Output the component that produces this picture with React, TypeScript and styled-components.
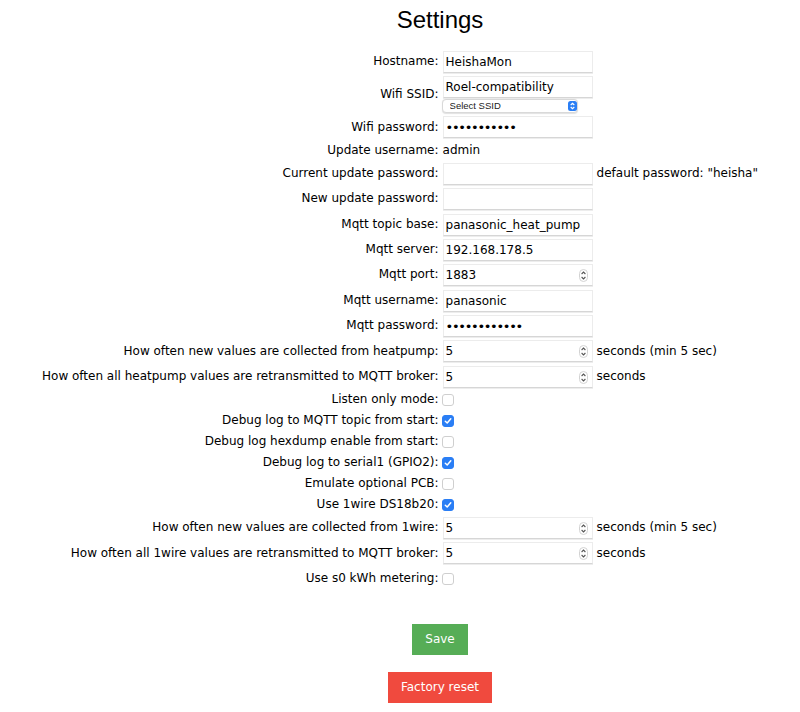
import React from "react";
import styled, { createGlobalStyle } from "styled-components";

const GlobalStyle = createGlobalStyle`
  body {
    margin: 0 8px;
    background: #ffffff;
    color: #000000;
    font-family: "DejaVu Sans", Verdana, sans-serif;
    font-size: 12px;
  }
`;

type FieldRow =
  | { kind: "input"; label: string; value: string; type?: "text" | "password" | "number"; note?: string }
  | { kind: "static"; label: string; value: string }
  | { kind: "check"; label: string; checked: boolean; gapAbove?: boolean }
  | { kind: "ssid"; label: string; value: string };

const rows: FieldRow[] = [
  { kind: "input", label: "Hostname:", value: "HeishaMon" },
  { kind: "ssid", label: "Wifi SSID:", value: "Roel-compatibility" },
  { kind: "input", label: "Wifi password:", value: "xxxxxxxxxxx", type: "password" },
  { kind: "static", label: "Update username:", value: "admin" },
  { kind: "input", label: "Current update password:", value: "", type: "password", note: 'default password: "heisha"' },
  { kind: "input", label: "New update password:", value: "", type: "password" },
  { kind: "input", label: "Mqtt topic base:", value: "panasonic_heat_pump" },
  { kind: "input", label: "Mqtt server:", value: "192.168.178.5" },
  { kind: "input", label: "Mqtt port:", value: "1883", type: "number" },
  { kind: "input", label: "Mqtt username:", value: "panasonic" },
  { kind: "input", label: "Mqtt password:", value: "xxxxxxxxxxxx", type: "password" },
  { kind: "input", label: "How often new values are collected from heatpump:", value: "5", type: "number", note: "seconds (min 5 sec)" },
  { kind: "input", label: "How often all heatpump values are retransmitted to MQTT broker:", value: "5", type: "number", note: "seconds" },
  { kind: "check", label: "Listen only mode:", checked: false },
  { kind: "check", label: "Debug log to MQTT topic from start:", checked: true },
  { kind: "check", label: "Debug log hexdump enable from start:", checked: false },
  { kind: "check", label: "Debug log to serial1 (GPIO2):", checked: true },
  { kind: "check", label: "Emulate optional PCB:", checked: false },
  { kind: "check", label: "Use 1wire DS18b20:", checked: true },
  { kind: "input", label: "How often new values are collected from 1wire:", value: "5", type: "number", note: "seconds (min 5 sec)" },
  { kind: "input", label: "How often all 1wire values are retransmitted to MQTT broker:", value: "5", type: "number", note: "seconds" },
  { kind: "check", label: "Use s0 kWh metering:", checked: false, gapAbove: true },
];

const Page = styled.div`
  padding-bottom: 10px;
`;

const Heading = styled.h2`
  margin: 6px 0 15px;
  padding-left: 80px;
  text-align: center;
  font-family: "Liberation Sans", Arial, sans-serif;
  font-size: 24px;
  line-height: 28px;
  font-weight: 400;
`;

const SettingsTable = styled.table`
  margin: 0 auto;
  border-collapse: collapse;
  border-spacing: 0;
`;

const Row = styled.tr<{ $gapAbove?: boolean }>`
  & > td {
    padding-top: ${(p) => (p.$gapAbove ? "4px" : "1.7px")};
  }
`;

const Cell = styled.td`
  padding: 1.7px 2px;
  line-height: 17.6px;
  vertical-align: middle;
  white-space: nowrap;
`;

const LabelCell = styled(Cell)`
  text-align: right;
`;

const FieldWrap = styled.div`
  position: relative;
  width: 150px;
`;

const TextInput = styled.input`
  display: block;
  box-sizing: border-box;
  width: 150px;
  height: 22px;
  margin: 0;
  padding: 0 2px;
  border: 1px solid #ececec;
  border-bottom-color: #d6d6d6;
  box-shadow: 0 1px 0 #ededed;
  background: #ffffff;
  font-family: "DejaVu Sans", Verdana, sans-serif;
  font-size: 12px;
  color: #000000;
  outline: none;

  &[type="password"] {
    font-size: 13px;
    letter-spacing: -1.3px;
  }
  &::-webkit-inner-spin-button,
  &::-webkit-outer-spin-button {
    -webkit-appearance: none;
    margin: 0;
  }
  -moz-appearance: textfield;
`;

const Spinner = styled.span`
  position: absolute;
  right: 5px;
  top: 5px;
  width: 9px;
  height: 13px;
  display: flex;
`;

const SsidSelect = styled.select`
  display: block;
  appearance: none;
  box-sizing: border-box;
  width: 136px;
  height: 14px;
  margin: 1px 0 0 -1px;
  padding: 0 0 0 7px;
  border: 1px solid #d9d9d9;
  border-radius: 4px;
  background: #ffffff;
  font-family: "Liberation Sans", Arial, sans-serif;
  font-size: 9.5px;
  line-height: 12px;
  color: #222222;
  box-shadow: 0 0.5px 1px rgba(0, 0, 0, 0.12);
`;

const SelectArrows = styled.span`
  position: absolute;
  left: 125px;
  bottom: 2px;
  width: 9px;
  height: 10px;
  border-radius: 2.5px;
  background: #2a7ef5;
  display: flex;
  align-items: center;
  justify-content: center;
`;

const Box = styled.span<{ $checked: boolean }>`
  display: inline-flex;
  align-items: center;
  justify-content: center;
  box-sizing: border-box;
  width: 12px;
  height: 12px;
  margin-left: -1px;
  vertical-align: middle;
  border-radius: 3px;
  border: 1px solid ${(p) => (p.$checked ? "#2a7ef5" : "#cfcfcf")};
  background: ${(p) => (p.$checked ? "#2a7ef5" : "#ffffff")};
`;

const ButtonBar = styled.div`
  display: flex;
  flex-direction: column;
  align-items: center;
  gap: 17px;
  margin-top: 35px;
  padding-left: 80px;
`;

const Button = styled.button<{ $tone: "green" | "red" }>`
  border: none;
  margin: 0;
  padding: 8px 13px;
  line-height: 15px;
  font-family: "DejaVu Sans", Verdana, sans-serif;
  font-size: 12px;
  color: #ffffff;
  cursor: pointer;
  background: ${(p) => (p.$tone === "green" ? "#56ad56" : "#f04a3e")};
`;

const SpinnerIcon = () => (
  <svg width="9" height="13" viewBox="0 0 9 13">
    <rect x="0.5" y="0.5" width="8" height="12" rx="4" fill="#fff" stroke="#d2d2d2" />
    <path d="M2.6 5 L4.5 3.1 L6.4 5" fill="none" stroke="#555" strokeWidth="1.1" />
    <path d="M2.6 8 L4.5 9.9 L6.4 8" fill="none" stroke="#555" strokeWidth="1.1" />
  </svg>
);

const SelectIcon = () => (
  <svg width="9" height="10" viewBox="0 0 9 10">
    <path d="M2.7 4 L4.5 2.3 L6.3 4" fill="none" stroke="#fff" strokeWidth="1.1" />
    <path d="M2.7 6 L4.5 7.7 L6.3 6" fill="none" stroke="#fff" strokeWidth="1.1" />
  </svg>
);

const CheckMark = () => (
  <svg width="8" height="8" viewBox="0 0 8 8">
    <path d="M1.3 4.2 L3.2 6 L6.8 1.8" fill="none" stroke="#fff" strokeWidth="1.5" strokeLinecap="round" strokeLinejoin="round" />
  </svg>
);

const Field = ({ row }: { row: FieldRow }) => {
  switch (row.kind) {
    case "static":
      return <>{row.value}</>;
    case "check":
      return (
        <Box $checked={row.checked} role="checkbox" aria-checked={row.checked}>
          {row.checked && <CheckMark />}
        </Box>
      );
    case "ssid":
      return (
        <FieldWrap>
          <TextInput type="text" value={row.value} readOnly />
          <SsidSelect defaultValue="">
            <option value="">Select SSID</option>
          </SsidSelect>
          <SelectArrows>
            <SelectIcon />
          </SelectArrows>
        </FieldWrap>
      );
    default:
      return (
        <FieldWrap>
          <TextInput type={row.type ?? "text"} value={row.value} readOnly />
          {row.type === "number" && (
            <Spinner>
              <SpinnerIcon />
            </Spinner>
          )}
        </FieldWrap>
      );
  }
};

export default function App() {
  return (
    <Page>
      <GlobalStyle />
      <Heading>Settings</Heading>
      <form onSubmit={(e) => e.preventDefault()}>
        <SettingsTable>
          <tbody>
            {rows.map((row) => (
              <Row key={row.label} $gapAbove={row.kind === "check" && row.gapAbove}>
                <LabelCell>{row.label}</LabelCell>
                <Cell>
                  <Field row={row} />
                </Cell>
                <Cell>{row.kind === "input" ? row.note : null}</Cell>
              </Row>
            ))}
          </tbody>
        </SettingsTable>
        <ButtonBar>
          <Button type="submit" $tone="green">
            Save
          </Button>
          <Button type="button" $tone="red">
            Factory reset
          </Button>
        </ButtonBar>
      </form>
    </Page>
  );
}
